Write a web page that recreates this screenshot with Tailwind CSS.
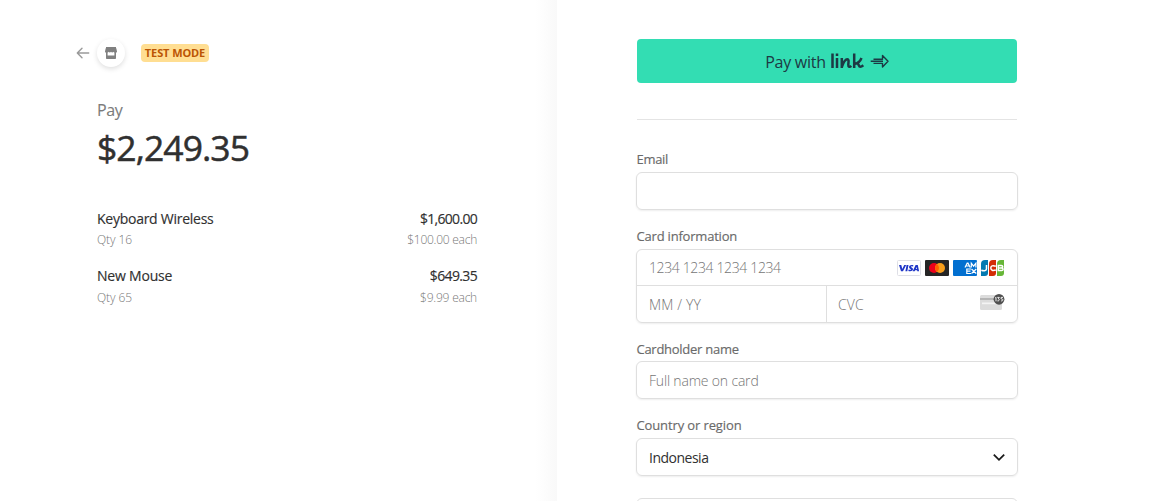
<!DOCTYPE html>
<html lang="en">
<head>
<meta charset="utf-8">
<title>Checkout</title>
<script src="https://cdn.jsdelivr.net/npm/@tailwindcss/browser@4"></script>
</head>
<body class="h-[501px] overflow-hidden bg-white font-['Open_Sans','Noto_Sans',sans-serif] text-[#303030]">
<div class="flex h-[501px] overflow-hidden">
  <section class="w-[557px] shrink-0 bg-[linear-gradient(to_right,#fff_535px,#f9f9f9_557px)] pl-[76px] pr-20 pt-[38px]">
    <header class="flex h-[30px] items-center">
      <svg class="h-[14px] w-[14px]" viewBox="0 0 14 14" fill="none" stroke="#9a9a9a" stroke-width="1.4" stroke-linecap="round" stroke-linejoin="round"><path d="M12.7 7H1.5M6 2.2L1.3 7L6 11.8"/></svg>
      <div class="ml-[7px] flex h-7 w-7 items-center justify-center rounded-full bg-white shadow-[0_2px_5px_rgba(0,0,0,0.13)]">
        <svg class="h-3 w-3" viewBox="0 0 12 12" fill="#808080"><path d="M1 0h10v1.200H1zM.7 1.200h10.600L12 4.500c0 .7-.4 1.200-1 1.200V11c0 .6-.4 1-1 1H2c-.6 0-1-.4-1-1V5.700C.4 5.700 0 5.200 0 4.500zM2.600 5.500V8.500h6.800V5.500c-.6 0-.8-.3-1-.7-.6.900-1.900.900-2.400 0-.5.900-1.800.9-2.400 0-.2.400-.4.700-1 .7z" fill-rule="evenodd"/></svg>
      </div>
      <div class="ml-4 flex h-[18px] w-[68px] items-center justify-center whitespace-nowrap rounded bg-[#ffde92] text-[11px] font-bold tracking-[-0.1px] text-[#bb5504]">TEST MODE</div>
    </header>
    <div class="pl-[21px]">
      <p class="mt-[31px] text-[16px] leading-[22px] tracking-[-0.4px] text-[#7b7b7b] [-webkit-text-stroke:0.1px]">Pay</p>
      <p class="mt-1 text-[35.5px] leading-[44px] tracking-[-0.95px] [-webkit-text-stroke:0.5px]">$2,249.35</p>
      <div class="mt-[40px] flex justify-between text-[14px] leading-5 [-webkit-text-stroke:0.15px]"><span class="tracking-[-0.26px]">Keyboard Wireless</span><span class="tracking-[-0.7px]">$1,600.00</span></div>
      <div class="mt-[2px] flex justify-between text-[12px] leading-[18px] font-light text-[#777]"><span class="tracking-[-0.1px]">Qty 16</span><span class="tracking-[-0.25px]">$100.00 each</span></div>
      <div class="mt-[17px] flex justify-between text-[14px] leading-5 [-webkit-text-stroke:0.15px]"><span class="tracking-[-0.2px]">New Mouse</span><span class="tracking-[-0.65px]">$649.35</span></div>
      <div class="mt-[3px] flex justify-between text-[12px] leading-[18px] font-light text-[#777]"><span class="tracking-[-0.1px]">Qty 65</span><span class="tracking-[-0.22px]">$9.99 each</span></div>
    </div>
  </section>
  <main class="w-[462px] shrink-0 pl-[79px] pt-[39px]">
    <button class="ml-px flex h-11 w-[380px] items-center justify-center rounded bg-[#33ddb3] text-[#1d3944]">
      <span class="pt-0.5 text-[16px] tracking-[-0.25px]">Pay with</span>
      <svg class="ml-[5px] h-4 w-[58px]" viewBox="0 0 58 16" fill="none" stroke="#1d3944" stroke-linejoin="round"><path stroke-width="2.500" d="M1.500.5V15M6 5V15M6 .5v2.500M10.800 15V5M10.800 14C12.500 9 14.500 6.200 16.300 6.200S17.500 9 17.300 11.500c-.2 2.600 1.500 2.800 3 1.400M23.200.5V15M23.200 11C27 10.500 29.200 8.500 30.500 5M26 10.300C28 10 27.300 13.800 29.300 13.800c1.200 0 2-.6 3-1.500"/><path stroke-width="1.400" d="M42.500 6.200H51.500V2.500L57 8.300 51.500 14.100V10.400H42.500M39.700 8.300H52"/></svg>
    </button>
    <hr class="mt-9 ml-px w-[380px] border-[#e4e4e4]">
    <div class="w-[382px] text-[13px] text-[#6a6a6a]">
      <label class="mt-[30px] block pl-[0.5px] leading-[18px] tracking-[-0.3px] [-webkit-text-stroke:0.15px]">Email</label>
      <div class="mt-1 h-[38px] rounded-md border border-[#dfdfdf] shadow-[0_1px_2px_rgba(0,0,0,0.07)]"></div>
      <label class="mt-[17px] block pl-[0.5px] leading-[18px] tracking-[-0.2px] [-webkit-text-stroke:0.15px]">Card information</label>
      <div class="mt-1 h-[74px] rounded-md border border-[#dfdfdf] text-[14px] font-light text-[#757575] shadow-[0_1px_2px_rgba(0,0,0,0.07)]">
        <div class="flex h-9 items-center justify-between border-b border-[#dfdfdf] pl-3 pr-3">
          <span class="tracking-[-0.37px]">1234 1234 1234 1234</span>
          <div class="flex gap-1">
            <svg class="h-4 w-6" viewBox="0 0 24 16"><rect x=".5" y=".5" width="23" height="15" rx="1" fill="#fff" stroke="#dedfe6"/><path d="M2 5h2.300l1 4 1.900-4h2L6 11.200H4zM9.600 5h1.900l-1.200 6.200H8.400zM16.400 5.200l-.4 1.500c-1.200-.6-2-.3-2 .1 0 .7 2.100.8 2 2.500-.2 2-2.800 2.400-4.700 1.600l.4-1.500c1.300.6 2.300.4 2.300 0 0-.7-2-.8-2-2.500.1-1.700 2.300-2.400 4.400-1.700zM15.700 11.200L18.600 5h2.200l1.300 6.200h-1.800l-.2-.9h-2l-.4.900zM18.800 8.900h1.100L19.500 7z" fill="#1f36c7"/></svg>
            <svg class="h-4 w-6" viewBox="0 0 24 16"><rect width="24" height="16" rx="1" fill="#252525"/><circle cx="9" cy="8" r="5" fill="#eb001b"/><circle cx="15" cy="8" r="5" fill="#f79e1b"/><path d="M12 4a5 5 0 0 1 0 8 5 5 0 0 1 0-8" fill="#ff5f00"/></svg>
            <svg class="h-4 w-6" viewBox="0 0 24 16"><rect width="24" height="16" rx="1" fill="#016fd0"/><g fill="none" stroke="#fff" stroke-width="1.200"><path d="M12 7.500l2.200-4.300h.8L17.200 7.500M13.100 6h3M18.300 7.500V3.200l2.300 3 2.300-3v4.300M18 9h-4.200v4.500H18M13.800 11.200h3.700M18.500 9l4.800 4.500M23.300 9l-4.800 4.500"/></g></svg>
            <svg class="h-4 w-6" viewBox="0 0 24 16"><path d="M4 0h3v13a3 3 0 0 1-3 3H0V4a4 4 0 0 1 4-4z" fill="#047ab1"/><path d="M12 0h3v13a3 3 0 0 1-3 3H8V4a4 4 0 0 1 4-4z" fill="#d42d06"/><path d="M20 0h3v13a3 3 0 0 1-3 3h-4V4a4 4 0 0 1 4-4z" fill="#67b637"/><g fill="none" stroke="#fff" stroke-width="1.500"><path d="M5.500 5v4c0 2-3 2-5.200 1.200M14.800 6.200c-3-1-5-.5-5 1.900s2 2.800 5 1.900M17.300 5.500h3c1.900 0 1.900 2.400 0 2.400h-3 3.300c2 0 2 2.700 0 2.700h-3.300zM17.300 5.500v5"/></g></svg>
          </div>
        </div>
        <div class="flex h-9">
          <div class="flex w-[190px] items-center border-r border-[#dfdfdf] pl-3"><span class="tracking-[0.15px]">MM / YY</span></div>
          <div class="flex grow items-center justify-between pl-[11px] pr-3"><span class="tracking-[0.1px]">CVC</span>
            <svg class="mb-1 h-[18px] w-[26px]" viewBox="0 0 26 18"><rect x="1" y="2" width="22" height="15" rx="1.500" fill="#dcdcdc"/><path d="M1 5h22v2H1z" fill="#b5b5b5"/><path d="M3 9.500h18v1.700H3z" fill="#f4f4f4"/><circle cx="20" cy="6.300" r="5.400" fill="#505050"/><g fill="none" stroke="#fff" stroke-width=".9"><path d="M16.200 5l.8-.7v4M18.300 4.400h2l-1 1.400c1.600 0 1.300 2.400-.9 2.100M24 4.400h-1.900v1.500c2.400-.2 2.400 2.300-.1 2"/></g></svg>
          </div>
        </div>
      </div>
      <label class="mt-[17px] block pl-[0.5px] leading-[18px] tracking-[-0.27px] [-webkit-text-stroke:0.15px]">Cardholder name</label>
      <div class="mt-[3px] flex h-[38px] items-center rounded-md border border-[#dfdfdf] pl-3 text-[14px] font-light tracking-[-0.18px] text-[#757575] shadow-[0_1px_2px_rgba(0,0,0,0.07)]">Full name on card</div>
      <label class="mt-[17px] block pl-[0.5px] leading-[18px] tracking-[-0.12px] [-webkit-text-stroke:0.15px]">Country or region</label>
      <div class="mt-1 flex h-[38px] items-center justify-between rounded-md border border-[#dfdfdf] pl-3 pr-3 text-[14px] tracking-[-0.5px] text-[#303030] shadow-[0_1px_2px_rgba(0,0,0,0.07)]"><span class="pt-px">Indonesia</span>
        <svg class="h-3 w-3" viewBox="0 0 12 12" fill="none" stroke="#1a1a1a" stroke-width="1.800"><path d="M.8 3.600L6 8.800l5.200-5.200"/></svg>
      </div>
      <div class="mt-[22px] h-[38px] rounded-md border border-[#dfdfdf]"></div>
    </div>
  </main>
</div>
</body>
</html>
